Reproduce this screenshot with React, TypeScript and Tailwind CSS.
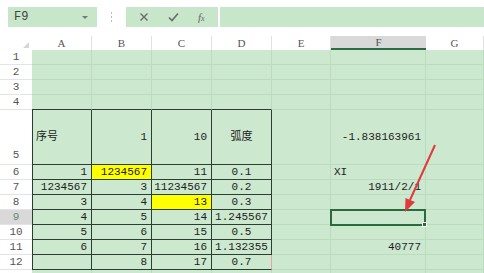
import React from "react";

type Cell = { v?: string; a?: "l" | "r" | "c"; y?: boolean };

const colWidths = ["A", "B", "C", "D", "E", "F", "G"];

// rows 1..13, each with 7 cells (A..G); row 13 is only a sliver at the bottom
const rows: { n: number; h: "s" | "t"; cells: Cell[] }[] = [
  { n: 1, h: "s", cells: [{}, {}, {}, {}, {}, {}, {}] },
  { n: 2, h: "s", cells: [{}, {}, {}, {}, {}, {}, {}] },
  { n: 3, h: "s", cells: [{}, {}, {}, {}, {}, {}, {}] },
  { n: 4, h: "s", cells: [{}, {}, {}, {}, {}, {}, {}] },
  {
    n: 5,
    h: "t",
    cells: [
      { v: "序号", a: "l" },
      { v: "1", a: "r" },
      { v: "10", a: "r" },
      { v: "弧度", a: "c" },
      {},
      { v: "-1.838163961", a: "r" },
      {},
    ],
  },
  {
    n: 6,
    h: "s",
    cells: [
      { v: "1", a: "r" },
      { v: "1234567", a: "r", y: true },
      { v: "11", a: "r" },
      { v: "0.1", a: "c" },
      {},
      { v: "XI", a: "l" },
      {},
    ],
  },
  {
    n: 7,
    h: "s",
    cells: [
      { v: "1234567", a: "r" },
      { v: "3", a: "r" },
      { v: "11234567", a: "r" },
      { v: "0.2", a: "c" },
      {},
      { v: "1911/2/1", a: "r" },
      {},
    ],
  },
  {
    n: 8,
    h: "s",
    cells: [
      { v: "3", a: "r" },
      { v: "4", a: "r" },
      { v: "13", a: "r", y: true },
      { v: "0.3", a: "c" },
      {},
      {},
      {},
    ],
  },
  {
    n: 9,
    h: "s",
    cells: [
      { v: "4", a: "r" },
      { v: "5", a: "r" },
      { v: "14", a: "r" },
      { v: "1.245567", a: "c" },
      {},
      {},
      {},
    ],
  },
  {
    n: 10,
    h: "s",
    cells: [
      { v: "5", a: "r" },
      { v: "6", a: "r" },
      { v: "15", a: "r" },
      { v: "0.5", a: "c" },
      {},
      {},
      {},
    ],
  },
  {
    n: 11,
    h: "s",
    cells: [
      { v: "6", a: "r" },
      { v: "7", a: "r" },
      { v: "16", a: "r" },
      { v: "1.132355", a: "c" },
      {},
      { v: "40777", a: "r" },
      {},
    ],
  },
  {
    n: 12,
    h: "s",
    cells: [
      {},
      { v: "8", a: "r" },
      { v: "17", a: "r" },
      { v: "0.7", a: "c" },
      {},
      {},
      {},
    ],
  },
  { n: 13, h: "s", cells: [{}, {}, {}, {}, {}, {}, {}] },
];

const mono = "font-['Liberation_Mono','Noto_Sans_CJK_SC',monospace]";

function cellClass(r: number, c: number, cell: Cell) {
  const inTable = r >= 5 && r <= 12 && c <= 3;
  const parts = ["flex items-center overflow-visible whitespace-nowrap text-[11px] text-[#1d1d1d]", mono];
  if (cell.a === "r") parts.push("justify-end pr-[4px]");
  else if (cell.a === "c") parts.push("justify-center");
  else parts.push("justify-start pl-[3px]");
  parts.push(cell.y ? "bg-[#ffff00]" : "bg-[#cce8cf]");
  if (inTable) {
    parts.push("border-b border-b-[#2c3e30]");
    if (r === 12 && c === 3) parts.push("border-r border-r-[#e8a4a4]");
    else parts.push("border-r border-r-[#2c3e30]");
    if (c === 0) parts.push("border-l border-l-[#2c3e30]");
  } else if (r === 4 && c <= 3) {
    parts.push("border-b border-b-[#2c3e30] border-r border-r-[#bcdcbf]");
  } else {
    parts.push("border-b border-b-[#bcdcbf] border-r border-r-[#bcdcbf]");
  }
  return parts.join(" ");
}

export default function App() {
  return (
    <div className="relative w-[484px] h-[273px] overflow-hidden bg-white font-['Liberation_Sans',sans-serif]">
      {/* formula bar */}
      <div className="flex h-[36px] items-start pt-[7px] pl-[8px]">
        <div className="flex h-[20px] w-[89px] items-center justify-between bg-[#c8e6ca] pl-[6px] pr-[9px]">
          <span className={`${mono} text-[12px] text-[#444]`}>F9</span>
          <span className="h-0 w-0 border-x-[3px] border-t-[3px] border-x-transparent border-t-[#777]" />
        </div>
        <div className="flex h-[20px] w-[29px] flex-col items-center justify-center gap-[2px]">
          <span className="h-[2px] w-[1px] bg-[#bbb]" />
          <span className="h-[2px] w-[1px] bg-[#bbb]" />
          <span className="h-[2px] w-[1px] bg-[#bbb]" />
        </div>
        <div className="flex h-[20px] w-[92px] items-center justify-around bg-[#c8e6ca] px-[4px] text-[#6b6b6b]">
          <svg width="10" height="10" viewBox="0 0 10 10">
            <path d="M1.5 1.5 L8.5 8.5 M8.5 1.5 L1.5 8.5" stroke="#6b6b6b" strokeWidth="1.4" />
          </svg>
          <svg width="11" height="10" viewBox="0 0 11 10">
            <path d="M1 5.5 L4 8.5 L10 1.5" stroke="#6b6b6b" strokeWidth="1.6" fill="none" />
          </svg>
          <span className="font-['Liberation_Serif',serif] text-[11px] italic text-[#666]">
            f<span className="text-[8px]">x</span>
          </span>
        </div>
        <div className="ml-[2px] h-[20px] flex-1 bg-[#c8e6ca]" />
      </div>

      {/* sheet */}
      <div className="grid grid-cols-[32px_60px_60px_60px_60px_59px_95px_58px]">
        {/* column headers */}
        <div className="relative h-[14px] bg-white">
          <span className="absolute bottom-[2px] right-[3px] h-0 w-0 border-b-[6px] border-l-[6px] border-b-[#d5d5d5] border-l-transparent" />
        </div>
        {colWidths.map((l) => (
          <div
            key={l}
            className={
              l === "F"
                ? "flex h-[14px] items-center justify-center border-b-2 border-b-[#2f6b45] bg-[#d9d9d9] font-['Liberation_Serif',serif] text-[11px] text-[#555]"
                : "flex h-[14px] items-center justify-center border-r border-r-[#e2e2e2] bg-white font-['Liberation_Serif',serif] text-[11px] text-[#555]"
            }
          >
            {l}
          </div>
        ))}

        {rows.map((row) => (
          <React.Fragment key={row.n}>
            <div
              className={
                (row.h === "t" ? "h-[55px] items-end pb-[1px] " : "h-[15px] items-center ") +
                (row.n === 9 ? "bg-[#d9d9d9] text-[#6a8a72] " : "bg-white text-[#555] ") +
                "flex justify-center border-b border-b-[#e4e4e4] font-['Liberation_Mono',monospace] text-[11px]"
              }
            >
              {row.n <= 12 ? row.n : null}
            </div>
            {row.cells.map((cell, c) => (
              <div
                key={c}
                className={
                  (row.h === "t" ? "h-[55px] " : "h-[15px] ") +
                  (row.n === 9 && c === 5 ? "relative " : "") +
                  cellClass(row.n, c, cell)
                }
              >
                {cell.v}
                {row.n === 9 && c === 5 && (
                  <div className="absolute -left-[1px] -top-[1px] h-[17px] w-[96px] border-2 border-[#2a6a3f]">
                    <span className="absolute -bottom-[3px] -right-[3px] h-[5px] w-[5px] border border-white bg-[#2a6a3f]" />
                  </div>
                )}
              </div>
            ))}
          </React.Fragment>
        ))}
      </div>

      {/* red arrow annotation */}
      <svg className="pointer-events-none absolute left-0 top-0" width="484" height="273">
        <line x1="435" y1="145" x2="410" y2="200" stroke="#e03a3e" strokeWidth="2" />
        <polygon points="405,212 415,202 405.5,198" fill="#e03a3e" />
      </svg>
    </div>
  );
}
